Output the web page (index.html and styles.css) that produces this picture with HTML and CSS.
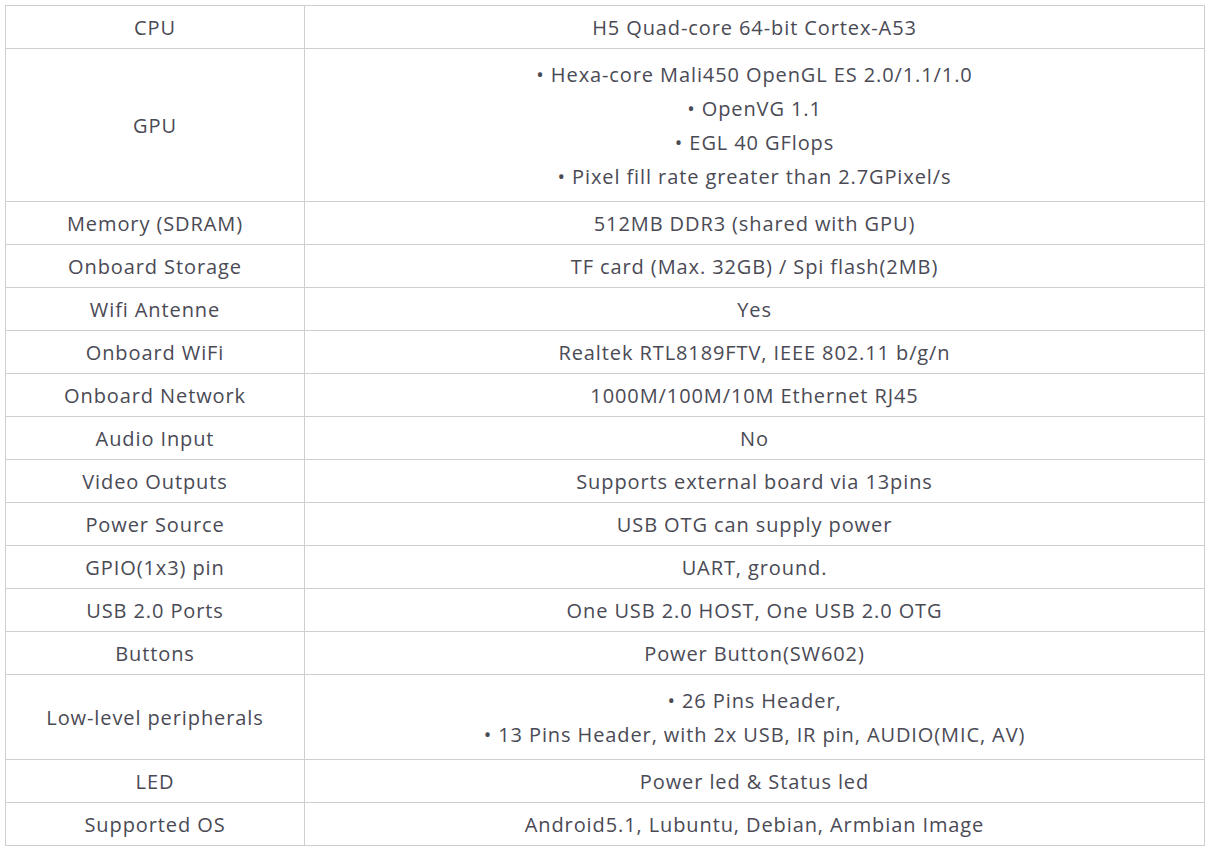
FILE: index.html
```html
<!DOCTYPE html>
<html>
<head>
<meta charset="utf-8">
<link rel="stylesheet" href="styles.css">
</head>
<body>
<table class="spec">
  <colgroup><col class="c1"><col class="c2"></colgroup>
  <tr><td>CPU</td><td>H5 Quad-core 64-bit Cortex-A53</td></tr>
  <tr class="r4"><td>GPU</td><td>
    <div class="line">• Hexa-core Mali450 OpenGL ES 2.0/1.1/1.0</div>
    <div class="line">• OpenVG 1.1</div>
    <div class="line">• EGL 40 GFlops</div>
    <div class="line">• Pixel fill rate greater than 2.7GPixel/s</div>
  </td></tr>
  <tr><td>Memory (SDRAM)</td><td>512MB DDR3 (shared with GPU)</td></tr>
  <tr><td>Onboard Storage</td><td>TF card (Max. 32GB) / Spi flash(2MB)</td></tr>
  <tr><td>Wifi Antenne</td><td>Yes</td></tr>
  <tr><td>Onboard WiFi</td><td>Realtek RTL8189FTV, IEEE 802.11 b/g/n</td></tr>
  <tr><td>Onboard Network</td><td>1000M/100M/10M Ethernet RJ45</td></tr>
  <tr><td>Audio Input</td><td>No</td></tr>
  <tr><td>Video Outputs</td><td>Supports external board via 13pins</td></tr>
  <tr><td>Power Source</td><td>USB OTG can supply power</td></tr>
  <tr><td>GPIO(1x3) pin</td><td>UART, ground.</td></tr>
  <tr><td>USB 2.0 Ports</td><td>One USB 2.0 HOST, One USB 2.0 OTG</td></tr>
  <tr><td>Buttons</td><td>Power Button(SW602)</td></tr>
  <tr class="r2"><td>Low-level peripherals</td><td>
    <div class="line">• 26 Pins Header,</div>
    <div class="line">• 13 Pins Header, with 2x USB, IR pin, AUDIO(MIC, AV)</div>
  </td></tr>
  <tr><td>LED</td><td>Power led &amp; Status led</td></tr>
  <tr><td>Supported OS</td><td>Android5.1, Lubuntu, Debian, Armbian Image</td></tr>
</table>
</body>
</html>
```
FILE: styles.css
```css
html, body {
  margin: 0;
  padding: 0;
  background: #fff;
}
.spec {
  margin: 5px 0 0 5px;
  width: 1200px;
  border-collapse: collapse;
  table-layout: fixed;
  font-family: "Open Sans", "Noto Sans", sans-serif;
  font-size: 20px;
  letter-spacing: 0.9px;
  color: #4a4a55;
}
.c1 { width: 299px; }
.spec td {
  border: 1px solid #cfcfcf;
  text-align: center;
  vertical-align: middle;
  height: 41px;
  padding: 1px 4px 0;
  line-height: 34px;
}
.spec tr.r4 td { height: 151px; }
.spec tr.r2 td { height: 83px; }
.line { line-height: 34px; }
```
